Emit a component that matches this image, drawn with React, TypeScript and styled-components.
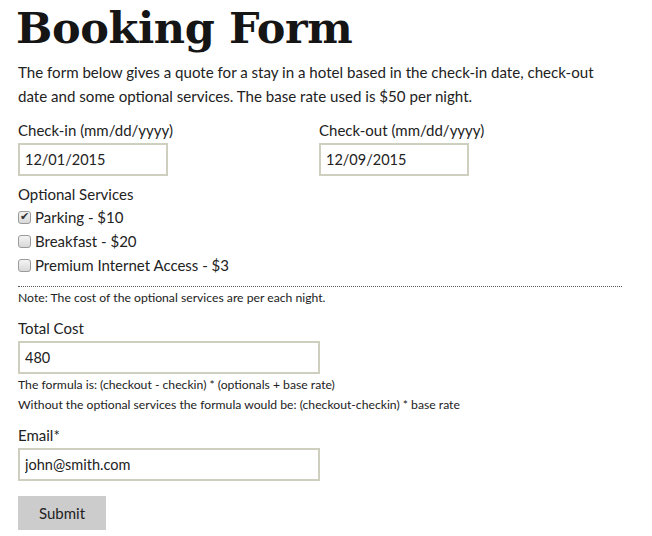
import styled, { createGlobalStyle } from "styled-components";

const GlobalStyle = createGlobalStyle`
    body {
        margin: 0;
        background: #ffffff;
        color: #222222;
        font-family: "Lato", "Open Sans", sans-serif;
    }
`;

const services = [
    { id: "parking", label: "Parking - $10", checked: true },
    { id: "breakfast", label: "Breakfast - $20", checked: false },
    { id: "internet", label: "Premium Internet Access - $3", checked: false },
];

export default function App(): JSX.Element {
    return (
        <>
            <GlobalStyle />
            <Page>
                <Title>Booking Form</Title>
                <Intro>
                    The form below gives a quote for a stay in a hotel based in the check-in date, check-out
                    date and some optional services. The base rate used is $50 per night.
                </Intro>
                <DateRow>
                    <Field>
                        <Label>Check-in (mm/dd/yyyy)</Label>
                        <TextInput width={150} defaultValue="12/01/2015" />
                    </Field>
                    <Field>
                        <Label>Check-out (mm/dd/yyyy)</Label>
                        <TextInput width={150} defaultValue="12/09/2015" />
                    </Field>
                </DateRow>
                <SectionLabel>Optional Services</SectionLabel>
                <Options>
                    {services.map((s) => {
                        return (
                            <Option key={s.id}>
                                <Check type="checkbox" defaultChecked={s.checked} />
                                {s.label}
                            </Option>
                        );
                    })}
                </Options>
                <Note>Note: The cost of the optional services are per each night.</Note>
                <Field>
                    <Label>Total Cost</Label>
                    <TextInput width={302} defaultValue="480" />
                </Field>
                <Formula>
                    The formula is: (checkout - checkin) * (optionals + base rate)
                    <br />
                    Without the optional services the formula would be: (checkout-checkin) * base rate
                </Formula>
                <Field>
                    <Label>Email*</Label>
                    <TextInput width={302} defaultValue="john@smith.com" />
                </Field>
                <Submit type="button">Submit</Submit>
            </Page>
        </>
    );
}

const Page = styled.div`
    padding: 0 18px;
    width: 604px;
`;

const Title = styled.h1`
    margin: 0;
    padding-top: 2px;
    font-family: "DejaVu Serif", serif;
    font-weight: bold;
    font-size: 43px;
    line-height: 52px;
    color: #151515;
    letter-spacing: -0.4px;
    margin-left: -2px;
`;

const Intro = styled.p`
    margin: 6px 0 0;
    font-size: 15.1px;
    line-height: 24px;
`;

const DateRow = styled.div`
    display: grid;
    grid-template-columns: 301px 1fr;
    margin-top: 12px;
`;

const Field = styled.div`
    display: flex;
    flex-direction: column;
`;

const Label = styled.div`
    font-size: 15px;
    line-height: 20px;
    margin-bottom: 3px;
`;

const SectionLabel = styled(Label)`
    margin-top: 8px;
    margin-bottom: 1px;
`;

const TextInput = styled.input<{ width: number }>`
    box-sizing: border-box;
    width: ${(p) => p.width}px;
    height: 33px;
    border: 2px solid #cfcfbf;
    padding: 0 5px;
    font-family: "Lato", sans-serif;
    font-size: 14.5px;
    color: #222222;
    outline: none;
`;

const Options = styled.div`
    display: flex;
    flex-direction: column;
`;

const Option = styled.label`
    display: flex;
    align-items: center;
    height: 24px;
    font-size: 15px;
`;

const Check = styled.input`
    appearance: none;
    position: relative;
    box-sizing: border-box;
    width: 13px;
    height: 13px;
    margin: 0 4px 0 0;
    border: 1px solid #9a9a9a;
    border-radius: 3px;
    background: linear-gradient(#f4f4f4, #d8d8d8);

    &:checked::after {
        content: "✔";
        position: absolute;
        left: 1px;
        top: -2px;
        font-size: 11px;
        color: #333333;
    }
`;

const Note = styled.div`
    margin-top: 9px;
    border-top: 1px dotted #555555;
    padding-top: 3px;
    font-size: 12.2px;
    line-height: 16px;
    margin-bottom: 12px;
`;

const Formula = styled.div`
    margin-top: 1px;
    font-size: 12.2px;
    line-height: 20px;
    margin-bottom: 10px;
`;

const Submit = styled.button`
    margin-top: 15px;
    width: 88px;
    height: 34px;
    border: none;
    background: #cccccc;
    font-family: "Lato", sans-serif;
    font-size: 15px;
    color: #222222;
`;
